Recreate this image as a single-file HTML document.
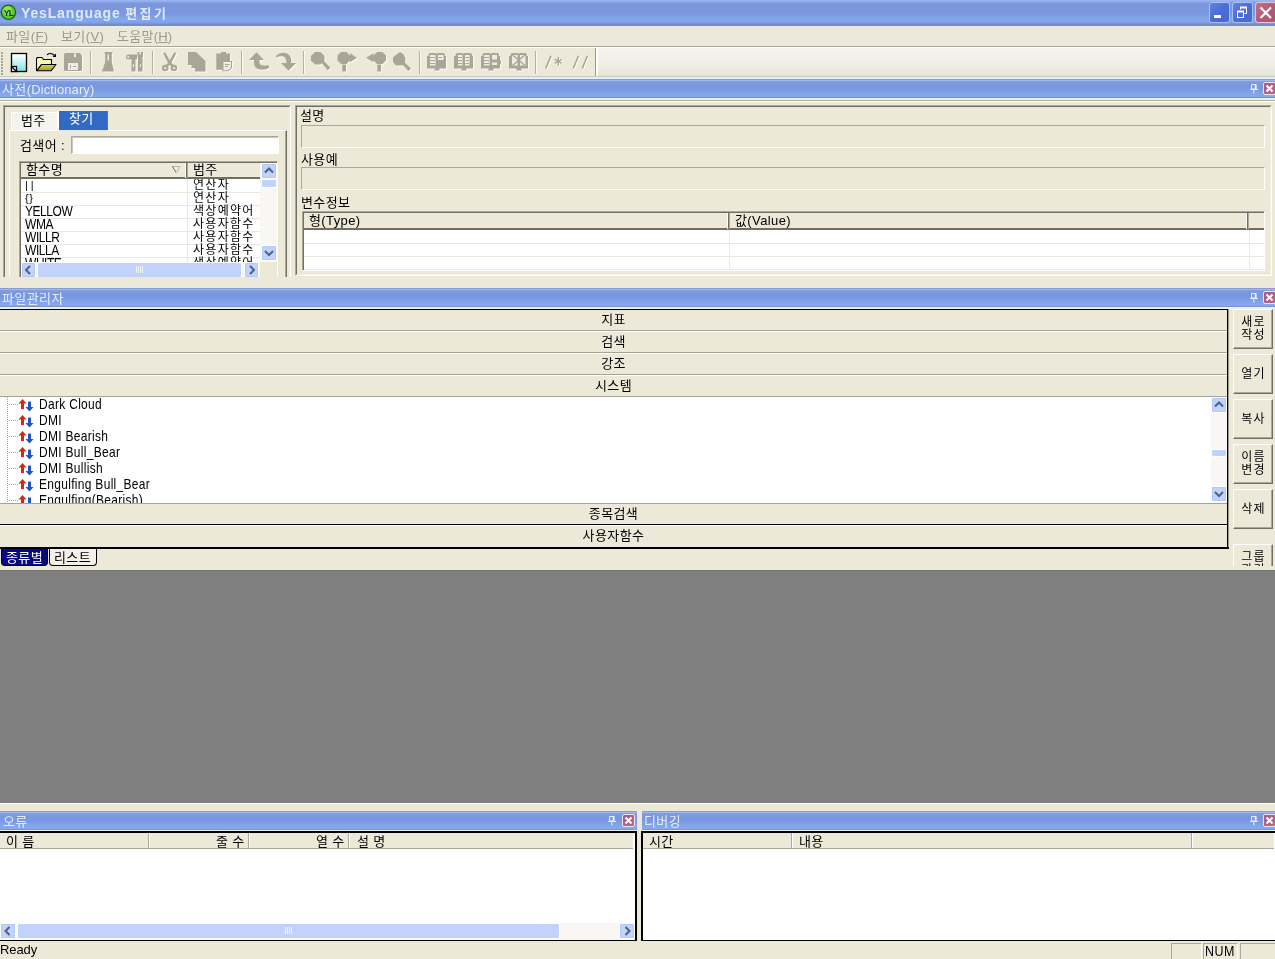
<!DOCTYPE html>
<html lang="ko">
<head>
<meta charset="utf-8">
<title>YesLanguage 편집기</title>
<style>
*{box-sizing:border-box;margin:0;padding:0}
html,body{width:1275px;height:959px;overflow:hidden;background:#ECE9D8}
body{position:relative;will-change:transform;font-family:"Liberation Sans","Noto Sans CJK KR","NanumGothic",sans-serif;font-size:13px;color:#000;line-height:14px;letter-spacing:.4px}
.abs{position:absolute}
.t{position:absolute;white-space:nowrap;line-height:14px;margin-top:1px}
.la{letter-spacing:.3px;font-size:12px;transform:scaleY(1.2);transform-origin:0 0;margin-top:0}
.cp{letter-spacing:-.45px;font-size:12px;transform:scaleY(1.15);transform-origin:0 0;margin-top:0}
/* main title */
#title{left:0;top:0;width:1275px;height:26px;background:linear-gradient(to bottom,#9bb6f2 0px,#99b4f0 1px,#8ba5e6 2px,#809bde 3px,#7b96dd 5px,#7b97e0 14px,#7e9fe4 16px,#7fa8e9 19px,#7fa6ea 22px,#7f9be3 23px,#7b8fd3 24px,#7788c4 25px,#7788c4 26px)}
#title .txt{left:21px;top:4px;font-weight:bold;font-size:14px;color:#dfe8fa;letter-spacing:.85px;line-height:16px}
.cap{position:absolute;height:19px;background:linear-gradient(to bottom,#8a9cca 0px,#8a9cca 1px,#a0b8ee 1px,#a0b8ee 2px,#829fe2 2px,#7c9adf 4px,#7896de 6px,#7b9ae2 11px,#80a2e7 13px,#87a9eb 17px,#87a9eb 18px,#8090d0 18px,#8090d0 19px)}
.cap .txt{left:2px;top:3px;color:#e4ecfb}
.capline{position:absolute;height:2px;background:#e6f2ef}
.pin{position:absolute;width:7px;height:10px}
.cx{position:absolute;width:12px;height:12px;background:#c0607f;border:1px solid #fff;border-radius:2px}
.sunk{position:absolute;border:1px solid;border-color:#aca899 #fff #fff #aca899}
.hdr{position:absolute;background:#ECE9D8}
.bar{position:absolute;left:0;width:1227px;height:22px;background:#ECE9D8;text-align:center;line-height:20px}
.btn{position:absolute;left:1233px;width:40px;height:40px;background:#ECE9D8;border:1px solid;border-color:#fff #716f64 #716f64 #fff;box-shadow:inset -1px -1px 0 #aca899;text-align:center;line-height:12.5px;font-size:12px;letter-spacing:1.2px;padding-left:1px}
.sb{position:absolute;background:#f8f7f3}
.sbb{position:absolute;width:16px;height:16px;background:#c2d3fb;border:1px solid #fff;border-radius:2px;box-shadow:inset 0 0 0 1px #b4c8f6}
.thumb{position:absolute;background:#c2d3fb;border:1px solid #fff;border-radius:2px}
.ti{position:absolute;left:0;width:300px;height:16px}
.ti .t{left:39px;top:1px}
</style>
</head>
<body>
<!-- TITLE BAR -->
<div id="title" class="abs">
  <svg class="abs" style="left:0;top:4px" width="18" height="17" viewBox="0 0 18 17"><circle cx="8.4" cy="8.2" r="7.8" fill="#245f12"/><circle cx="8.4" cy="8.2" r="6.5" fill="#5ccb2e"/><circle cx="7.6" cy="6.6" r="4.3" fill="#9bef62" opacity=".75"/><text x="8.6" y="11.6" font-family="Liberation Sans" font-weight="bold" font-size="8.5" text-anchor="middle" fill="#0c3a0c" letter-spacing="-.6">YL</text></svg>
  <div class="t txt">YesLanguage <span style="font-size:13px;letter-spacing:2.3px">편집기</span></div>
</div>
<div class="abs" style="left:0;top:26px;width:1275px;height:1px;background:#e6f2ef"></div>
<!-- MENU -->
<div class="t" style="left:6px;top:29px;color:#9d9a8c">파일(<u>F</u>)</div>
<div class="t" style="left:61px;top:29px;color:#9d9a8c">보기(<u>V</u>)</div>
<div class="t" style="left:117px;top:29px;color:#9d9a8c;letter-spacing:.25px">도움말(<u>H</u>)</div>
<div class="abs" style="left:0;top:46px;width:1275px;height:1px;background:#aca899"></div>
<div class="abs" style="left:0;top:47px;width:1275px;height:1px;background:#fff"></div>
<!-- TOOLBAR -->
<div id="tb" class="abs" style="left:0;top:48px;width:1275px;height:29px">
<svg class="abs" style="left:0;top:0" width="600" height="29" viewBox="0 48 600 29">
<defs>
<linearGradient id="gnew" x1="0" y1="0" x2="0" y2="1"><stop offset="0" stop-color="#ffffff"/><stop offset=".2" stop-color="#eefcfc"/><stop offset="1" stop-color="#7adfe4"/></linearGradient>
<linearGradient id="gfold" x1="0" y1="0" x2="0" y2="1"><stop offset="0" stop-color="#d6d258"/><stop offset="1" stop-color="#a39f22"/></linearGradient>
<g id="sep"><rect x="0" y="51" width="1" height="23" fill="#b4b1a2"/><rect x="1" y="51" width="1" height="23" fill="#fbfaf6"/></g>
<g id="gray">
<!-- save -->
<path d="M65.500 53 H79.500 L82 55.500 V69.500 Q82 71 80.500 71 H65.500 Q64 71 64 69.500 V54.500 Q64 53 65.500 53 Z"/>
<!-- flask -->
<path d="M104.500 52 H112.500 V53.500 H111.800 V62 L114 71.500 H102 L105.200 62 V53.500 H104.500 Z"/>
<!-- tools: hammer + wrench -->
<path d="M128.500 54.500 H137 V59.500 H135.500 V71.500 H131.500 V59.500 H128.500 Q126 59.500 126 57 Q126 54.500 128.500 54.500 Z"/>
<path d="M137.500 52 H139.500 V54.500 H141 V52 H143 V57 H142.500 V71.500 H138 V57 H137.500 Z"/>
<!-- scissors -->
<path d="M163.200 53.200 L165.200 52.300 L171 62.500 L174.800 66 L172.500 67.500 L168.500 63.800 Z"/>
<path d="M176.300 53.200 L174.300 52.300 L168.500 62.500 L164.700 66 L167 67.500 L171 63.800 Z"/>
<circle cx="165.300" cy="68" r="3.300"/><circle cx="174" cy="68" r="3.300"/>
<!-- copy -->
<path d="M188 52 H196 L205.500 61 V71.500 H195 V68 H191.500 V65 H188 Z"/>
<!-- paste -->
<path d="M216.300 53.500 H221 V52 H226 V53.500 H230 V61 H232 V68 L228.500 71.300 H222.500 V69.800 H216.300 Z"/>
<!-- undo -->
<path d="M249 60 L256.500 52.300 L264 60 H259.500 V62 Q259.500 65.500 264 65.500 H269 V68 Q266.500 69.800 262 69.800 Q254 69.800 254 62.500 V60 Z"/>
<!-- redo -->
<path d="M276 55.800 Q279.500 52.300 284.500 52.800 Q291 53.800 291.300 61 V63 H296 L288.500 70.800 L281 63 H286.300 V61 Q286 56.300 281.500 56.300 Q279 56.300 276 57.500 Z"/>
<!-- find -->
<path d="M315 52 H320.500 L324.500 56 V60.500 L320.500 64.500 H315 L311 60.500 V56 Z"/>
<path d="M320.500 61.500 L322.800 59.800 L330.300 67.800 L327.800 70.300 Z"/>
<!-- find next -->
<path d="M341 52 H346.500 L350 55.500 V53.300 L357 57.800 L350 62.300 V60.500 L346.500 64 H341 L337.500 60.500 V55.500 Z"/>
<rect x="342.300" y="64.500" width="3.700" height="7"/>
<!-- find prev -->
<path d="M377 52 H382.500 L386 55.500 V60.500 L382.500 64 H377 L373.500 60.500 V62.300 L366 57.800 L373.500 53.300 V55.500 Z"/>
<rect x="377.300" y="64.500" width="3.700" height="7"/>
<!-- find 4 -->
<path d="M396.500 54.500 L400 52 L403.500 54.500 L405.300 58 V62 L402.500 65.500 H396 L393 62 V57.500 Z"/>
<path d="M401.500 63.500 L403.800 61.500 L411 68.500 L408.500 71 Z"/>
<!-- books -->
<path id="bk" d="M428.500 55 Q428.500 53 430.500 53 H435.500 L436.500 54 L437.500 53 H443 Q445 53 445 55 V56 H446 V68.500 H439.500 V70.500 H434.500 V68.500 H427 V56 H428.500 Z"/>
<use href="#bk" x="27"/><use href="#bk" x="54"/><use href="#bk" x="82"/>
<path d="M457 62 L454 59.500 V65 Z M499 62 L501 60 V64.500 Z"/>
<!-- comment glyphs -->
<path d="M550.200 55.500 L551.700 56 L546.500 68.700 L545 68.200 Z M577.700 55.500 L579.200 56 L574 68.700 L572.500 68.200 Z M586.700 55.500 L588.200 56 L583 68.700 L581.500 68.200 Z"/>
<path d="M557.500 57 H559 V60 L561.300 58.700 L562 60 L559.700 61.300 L562 62.600 L561.300 63.900 L559 62.600 V65.500 H557.500 V62.600 L555.200 63.900 L554.500 62.600 L556.800 61.300 L554.500 60 L555.200 58.700 L557.500 60 Z"/>
</g>
</defs>
<!-- gripper -->
<g fill="#a9a798"><rect x="1" y="52" width="2" height="2"/><rect x="1" y="55" width="2" height="2"/><rect x="1" y="58" width="2" height="2"/><rect x="1" y="61" width="2" height="2"/><rect x="1" y="64" width="2" height="2"/><rect x="1" y="67" width="2" height="2"/><rect x="1" y="70" width="2" height="2"/><rect x="1" y="73" width="2" height="2"/></g>
<!-- new -->
<rect x="11.500" y="53.500" width="15" height="18" fill="url(#gnew)" stroke="#000" stroke-width="1.300"/>
<rect x="11.500" y="66.500" width="5" height="5" fill="#fff" stroke="#000" stroke-width="1.300"/>
<path d="M12 67 L16 71" stroke="#000" stroke-width="1.300"/>
<!-- open -->
<path d="M36.500 71 V58.500 L37.500 57.500 H42 L43.500 59.500 H51.500 V64.500 H41.500 L36.800 70.800" fill="#fbf8b0" stroke="#000" stroke-width="1.100" stroke-linejoin="round"/>
<path d="M36.800 70.800 L41.500 64.500 H56 L51 70.800 Z" fill="url(#gfold)" stroke="#000" stroke-width="1.100" stroke-linejoin="round"/>
<path d="M47 54.800 Q51 52 54.500 55.500" fill="none" stroke="#000" stroke-width="1.100"/>
<path d="M52.500 57 H56 V53.500 Z" fill="#000"/>
<use href="#sep" x="90"/><use href="#sep" x="152"/><use href="#sep" x="241"/><use href="#sep" x="303"/><use href="#sep" x="419"/><use href="#sep" x="535"/>
<!-- disabled icons: highlight then gray -->
<use href="#gray" x="1" y="1" fill="#fbfaf5"/>
<use href="#gray" fill="#a9a697"/>
<!-- light details on top -->
<g fill="#efede3">
<rect x="68" y="63" width="10" height="7"/><rect x="74" y="53.500" width="2" height="3.500"/>
<rect x="107.500" y="54.500" width="1.500" height="6"/>
<circle cx="128.200" cy="57" r="1"/><rect x="133" y="64" width="1" height="3"/><rect x="140" y="64" width="1" height="3"/>
<circle cx="165.300" cy="68.200" r="1.100"/><circle cx="174" cy="68.200" r="1.100"/>
<path d="M223.500 62 H231 V67.500 L228 70.300 H223.500 Z"/>
<rect x="430" y="55" width="5.500" height="10.500"/><rect x="438" y="55" width="5.500" height="5"/>
<rect x="458" y="55" width="4.500" height="10.500"/><rect x="465" y="55" width="4.500" height="10.500"/>
<rect x="484" y="55" width="5.500" height="10.500"/><rect x="492" y="55" width="5" height="4.500"/><rect x="492" y="62.500" width="5" height="2.500"/>
<rect x="512" y="55" width="5.500" height="10.500"/><rect x="520" y="55" width="5.500" height="10.500"/>
</g>
<g stroke="#a9a697" stroke-width="1" fill="none">
<path d="M70.500 65 V68.500 M73 66.500 H76"/>
<path d="M225 64.500 H229.500 M225 66.500 H228"/>
<path d="M430 57.500 H435 M430 60.500 H435 M430 63.500 H435 M438.500 57.500 H442"/>
<path d="M458 57.500 H462 M458 60.500 H462 M458 63.500 H462 M465.500 57.500 H469 M465.500 60.500 H469 M465.500 63.500 H469"/>
<path d="M484 57.500 H489 M484 60.500 H489 M484 63.500 H489"/>
<path d="M512.500 55 L525 65.500 M525 55 L512.500 65.500" stroke-width="1.500"/>
</g>
<rect x="595" y="48" width="1" height="28" fill="#9d9a8c"/><rect x="596" y="48" width="2" height="28" fill="#fffffb"/>
</svg>
<div class="abs" style="left:598px;top:0;width:677px;height:28px;background:linear-gradient(to bottom,#f4f3ee,#efeee6 60%,#e6e4d6)"></div>
</div>
<div class="abs" style="left:0;top:76px;width:1275px;height:1px;background:#c8cabb"></div>
<div class="abs" style="left:0;top:77px;width:1275px;height:2px;background:#e6ecfb"></div>
<!-- DICTIONARY -->
<div class="cap" style="left:0;top:79px;width:1275px"><div class="t txt">사전<span style="letter-spacing:.1px">(Dictionary)</span></div></div>
<div class="capline" style="left:0;top:98px;width:1275px"></div>
<div class="abs" style="left:0;top:100px;width:1275px;height:1px;background:#aaada0"></div>
<div class="abs" style="left:0;top:101px;width:1275px;height:1px;background:#fffffa"></div>
<div id="dict" class="abs" style="left:0;top:0;width:1275px;height:277px;overflow:hidden">
<!-- left group frame -->
<div class="abs" style="left:3px;top:105px;width:288px;height:190px;border:1px solid;border-color:#aca899 #fff #fff #aca899"></div>
<div class="abs" style="left:4px;top:106px;width:286px;height:188px;border:1px solid;border-color:#716f64 #f1efe2 #f1efe2 #716f64"></div>
<!-- tabs -->
<div class="abs" style="left:11px;top:112px;width:47px;height:18px;background:#f5f4ec;border-left:1px solid #fff;border-top:1px solid #fff"></div>
<div class="t" style="left:21px;top:113px">범주</div>
<div class="abs" style="left:59px;top:111px;width:49px;height:20px;background:#316ac5;border-right:1px solid #716f64;border-bottom:1px solid #716f64"></div>
<div class="abs" style="left:57px;top:111px;width:2px;height:19px;background:#fff"></div>
<div class="t" style="left:69px;top:111px;color:#fff">찾기</div>
<!-- tab pane -->
<div class="abs" style="left:9px;top:130px;width:278px;height:160px;border:1px solid;border-color:#fff #716f64 #716f64 #fff;box-shadow:inset -1px 0 0 #aca899"></div>
<div class="abs" style="left:60px;top:130px;width:48px;height:1px;background:#dfe9fb"></div>
<div class="t" style="left:20px;top:138px">검색어 :</div>
<div class="abs" style="left:71px;top:136px;width:208px;height:18px;background:#fff;border:1px solid;border-color:#aca899 #fff #fff #aca899;box-shadow:inset 1px 1px 0 #c9c7ba"></div>
<!-- list -->
<div class="abs" style="left:19px;top:161px;width:259px;height:130px;background:#fff;border:1px solid;border-color:#aca899 #fff #fff #aca899"></div>
<div class="abs" style="left:20px;top:162px;width:257px;height:130px;border-left:1px solid #716f64;border-top:1px solid #716f64"></div>
<div class="abs" style="left:21px;top:163px;width:239px;height:14px;background:#ECE9D8"></div>
<div class="abs" style="left:21px;top:177px;width:239px;height:2px;background:#716f64"></div>
<div class="abs" style="left:185px;top:163px;width:1px;height:15px;background:#fff"></div>
<div class="abs" style="left:186px;top:163px;width:1px;height:15px;background:#716f64"></div>
<div class="abs" style="left:187px;top:163px;width:1px;height:15px;background:#aca899"></div>
<div class="t" style="left:26px;top:162px">함수명</div>
<div class="t" style="left:193px;top:162px">범주</div>
<svg class="abs" style="left:171px;top:165px" width="11" height="9" viewBox="0 0 11 9"><path d="M1 1.500 H9 L5.500 7.500" fill="none" stroke="#b9b6a6" stroke-width="1"/><path d="M1.500 1.500 L5 7.500" stroke="#716f64" stroke-width="1"/></svg>
<!-- rows -->
<div id="rows" class="abs" style="left:21px;top:179px;width:239px;height:83px;overflow:hidden;background:#fff">
<div class="abs" style="left:0;top:13px;width:239px;height:1px;background:#ebe9df"></div>
<div class="abs" style="left:0;top:26px;width:239px;height:1px;background:#ebe9df"></div>
<div class="abs" style="left:0;top:39px;width:239px;height:1px;background:#ebe9df"></div>
<div class="abs" style="left:0;top:52px;width:239px;height:1px;background:#ebe9df"></div>
<div class="abs" style="left:0;top:65px;width:239px;height:1px;background:#ebe9df"></div>
<div class="abs" style="left:0;top:78px;width:239px;height:1px;background:#ebe9df"></div>
<div class="abs" style="left:166px;top:0;width:1px;height:90px;background:#ebe9df"></div>
<div class="t cp" style="left:4px;top:-2px;letter-spacing:3px;transform:none;font-size:11px;margin-top:1px">||</div><div class="t" style="left:172px;top:-2px;font-size:12px;letter-spacing:1.3px">연산자</div>
<div class="t cp" style="left:4px;top:11px;letter-spacing:.5px;transform:none;font-size:11px;margin-top:1px">{}</div><div class="t" style="left:172px;top:11px;font-size:12px;letter-spacing:1.3px">연산자</div>
<div class="t cp" style="left:4px;top:24px">YELLOW</div><div class="t" style="left:172px;top:24px;font-size:12px;letter-spacing:1.3px">색상예약어</div>
<div class="t cp" style="left:4px;top:37px">WMA</div><div class="t" style="left:172px;top:37px;font-size:12px;letter-spacing:1.3px">사용자함수</div>
<div class="t cp" style="left:4px;top:50px">WILLR</div><div class="t" style="left:172px;top:50px;font-size:12px;letter-spacing:1.3px">사용자함수</div>
<div class="t cp" style="left:4px;top:63px">WILLA</div><div class="t" style="left:172px;top:63px;font-size:12px;letter-spacing:1.3px">사용자함수</div>
<div class="t cp" style="left:4px;top:76px">WHITE</div><div class="t" style="left:172px;top:76px;font-size:12px;letter-spacing:1.3px">색상예약어</div>
</div>
<!-- vscroll -->
<div class="sb" style="left:260px;top:163px;width:17px;height:99px"></div>
<div class="sbb" style="left:261px;top:163px;width:16px;height:16px"><svg width="14" height="14" viewBox="0 0 14 14"><path d="M3 8.500 L7 4.500 L11 8.500" fill="none" stroke="#4d6185" stroke-width="2"/></svg></div>
<div class="thumb" style="left:261px;top:179px;width:16px;height:9px"></div>
<div class="sbb" style="left:261px;top:245px;width:16px;height:16px"><svg width="14" height="14" viewBox="0 0 14 14"><path d="M3 5 L7 9 L11 5" fill="none" stroke="#4d6185" stroke-width="2"/></svg></div>
<!-- hscroll -->
<div class="sb" style="left:21px;top:262px;width:256px;height:16px;background:#ECE9D8"></div>
<div class="sb" style="left:21px;top:262px;width:239px;height:16px"></div>
<div class="sbb" style="left:21px;top:262px;width:15px;height:16px"><svg width="13" height="14" viewBox="0 0 13 14"><path d="M8 3 L4 7 L8 11" fill="none" stroke="#4d6185" stroke-width="2"/></svg></div>
<div class="thumb" style="left:37px;top:262px;width:205px;height:16px"><svg class="abs" style="left:97px;top:3px" width="9" height="8" viewBox="0 0 9 8"><path d="M1.500 0 V7 M3.500 0 V7 M5.500 0 V7 M7.500 0 V7" stroke="#eef4fe" stroke-width="1"/></svg></div>
<div class="sbb" style="left:244px;top:262px;width:15px;height:16px"><svg width="13" height="14" viewBox="0 0 13 14"><path d="M5 3 L9 7 L5 11" fill="none" stroke="#4d6185" stroke-width="2"/></svg></div>
<!-- right group -->
<div class="abs" style="left:295px;top:105px;width:977px;height:171px;border:1px solid;border-color:#aca899 #fff #fff #aca899"></div>
<div class="abs" style="left:296px;top:106px;width:975px;height:169px;border:1px solid;border-color:#716f64 #f1efe2 #f1efe2 #716f64"></div>
<div class="t" style="left:300px;top:108px">설명</div>
<div class="sunk" style="left:301px;top:125px;width:964px;height:23px"></div>
<div class="t" style="left:301px;top:152px">사용예</div>
<div class="sunk" style="left:301px;top:167px;width:964px;height:23px"></div>
<div class="t" style="left:301px;top:195px">변수정보</div>
<div class="abs" style="left:302px;top:211px;width:963px;height:60px;background:#fff;border:1px solid;border-color:#aca899 #fff #fff #aca899"></div>
<div class="abs" style="left:303px;top:212px;width:961px;height:58px;border-left:1px solid #716f64;border-top:1px solid #716f64"></div>
<div class="abs" style="left:304px;top:213px;width:960px;height:15px;background:#ECE9D8"></div>
<div class="abs" style="left:304px;top:228px;width:960px;height:2px;background:#716f64"></div>
<div class="t" style="left:309px;top:213px">형(Type)</div>
<div class="t" style="left:735px;top:213px">값(Value)</div>
<div class="abs" style="left:727px;top:213px;width:1px;height:16px;background:#fff"></div><div class="abs" style="left:728px;top:213px;width:1px;height:16px;background:#716f64"></div><div class="abs" style="left:729px;top:213px;width:1px;height:16px;background:#aca899"></div>
<div class="abs" style="left:1246px;top:213px;width:1px;height:16px;background:#fff"></div><div class="abs" style="left:1247px;top:213px;width:1px;height:16px;background:#716f64"></div><div class="abs" style="left:1248px;top:213px;width:1px;height:16px;background:#aca899"></div>
<div class="abs" style="left:304px;top:243px;width:960px;height:1px;background:#ebe9df"></div>
<div class="abs" style="left:304px;top:256px;width:960px;height:1px;background:#ebe9df"></div>
<div class="abs" style="left:304px;top:269px;width:960px;height:1px;background:#ebe9df"></div>
<div class="abs" style="left:729px;top:230px;width:1px;height:40px;background:#ebe9df"></div>
<div class="abs" style="left:1249px;top:230px;width:1px;height:40px;background:#ebe9df"></div>
</div>
<!-- FILE MANAGER -->
<div class="cap" style="left:0;top:288px;width:1275px"><div class="t txt">파일관리자</div></div>
<div id="fm" class="abs" style="left:0;top:0;width:1275px;height:571px;overflow:hidden">
<div class="capline" style="left:0;top:307px;width:1275px"></div>
<div class="abs" style="left:0;top:309px;width:1228px;height:1px;background:#000"></div>
<div class="abs" style="left:1227px;top:309px;width:1px;height:240px;background:#000"></div><div class="abs" style="left:1228px;top:309px;width:1px;height:240px;background:#000;opacity:.35"></div>
<div class="abs" style="left:0;top:310px;width:1227px;height:20px;text-align:center;line-height:20px">지표</div>
<div class="abs" style="left:0;top:330px;width:1227px;height:1px;background:#a5a393"></div><div class="abs" style="left:0;top:331px;width:1227px;height:1px;background:#fff"></div>
<div class="abs" style="left:0;top:352px;width:1227px;height:1px;background:#a5a393"></div><div class="abs" style="left:0;top:353px;width:1227px;height:1px;background:#fff"></div>
<div class="abs" style="left:0;top:374px;width:1227px;height:1px;background:#a5a393"></div><div class="abs" style="left:0;top:375px;width:1227px;height:1px;background:#fff"></div>
<div class="abs" style="left:0;top:332px;width:1227px;height:20px;text-align:center;line-height:20px">검색</div>
<div class="abs" style="left:0;top:354px;width:1227px;height:20px;text-align:center;line-height:20px">강조</div>
<div class="abs" style="left:0;top:376px;width:1227px;height:20px;text-align:center;line-height:20px">시스템</div>
<div class="abs" style="left:0;top:396px;width:1227px;height:1px;background:#a5a393"></div>
<div id="tree" class="abs" style="left:0;top:397px;width:1227px;height:106px;background:#fff;overflow:hidden">
<div class="abs" style="left:7px;top:0;width:1px;height:106px;background:repeating-linear-gradient(to bottom,#a0a0a0 0,#a0a0a0 1px,#fff 1px,#fff 2px)"></div>
<div class="abs" style="left:8px;top:7px;width:10px;height:1px;background:repeating-linear-gradient(to right,#fff 0,#fff 1px,#a0a0a0 1px,#a0a0a0 2px)"></div><svg class="abs" style="left:18px;top:1px" width="16" height="14" viewBox="0 0 16 14"><path d="M4.500 1 L8.500 5.500 H6 V11 H3 V5.500 H0.500 Z" fill="#d9241c"/><path d="M10 3.500 H13 V9 H15.500 L11.500 13.500 L7.500 9 H10 Z" fill="#1f55c8"/></svg><div class="t la" style="left:39px;top:-1px">Dark Cloud</div>
<div class="abs" style="left:8px;top:23px;width:10px;height:1px;background:repeating-linear-gradient(to right,#fff 0,#fff 1px,#a0a0a0 1px,#a0a0a0 2px)"></div><svg class="abs" style="left:18px;top:17px" width="16" height="14" viewBox="0 0 16 14"><path d="M4.500 1 L8.500 5.500 H6 V11 H3 V5.500 H0.500 Z" fill="#d9241c"/><path d="M10 3.500 H13 V9 H15.500 L11.500 13.500 L7.500 9 H10 Z" fill="#1f55c8"/></svg><div class="t la" style="left:39px;top:15px">DMI</div>
<div class="abs" style="left:8px;top:39px;width:10px;height:1px;background:repeating-linear-gradient(to right,#fff 0,#fff 1px,#a0a0a0 1px,#a0a0a0 2px)"></div><svg class="abs" style="left:18px;top:33px" width="16" height="14" viewBox="0 0 16 14"><path d="M4.500 1 L8.500 5.500 H6 V11 H3 V5.500 H0.500 Z" fill="#d9241c"/><path d="M10 3.500 H13 V9 H15.500 L11.500 13.500 L7.500 9 H10 Z" fill="#1f55c8"/></svg><div class="t la" style="left:39px;top:31px">DMI Bearish</div>
<div class="abs" style="left:8px;top:55px;width:10px;height:1px;background:repeating-linear-gradient(to right,#fff 0,#fff 1px,#a0a0a0 1px,#a0a0a0 2px)"></div><svg class="abs" style="left:18px;top:49px" width="16" height="14" viewBox="0 0 16 14"><path d="M4.500 1 L8.500 5.500 H6 V11 H3 V5.500 H0.500 Z" fill="#d9241c"/><path d="M10 3.500 H13 V9 H15.500 L11.500 13.500 L7.500 9 H10 Z" fill="#1f55c8"/></svg><div class="t la" style="left:39px;top:47px">DMI Bull_Bear</div>
<div class="abs" style="left:8px;top:71px;width:10px;height:1px;background:repeating-linear-gradient(to right,#fff 0,#fff 1px,#a0a0a0 1px,#a0a0a0 2px)"></div><svg class="abs" style="left:18px;top:65px" width="16" height="14" viewBox="0 0 16 14"><path d="M4.500 1 L8.500 5.500 H6 V11 H3 V5.500 H0.500 Z" fill="#d9241c"/><path d="M10 3.500 H13 V9 H15.500 L11.500 13.500 L7.500 9 H10 Z" fill="#1f55c8"/></svg><div class="t la" style="left:39px;top:63px">DMI Bullish</div>
<div class="abs" style="left:8px;top:87px;width:10px;height:1px;background:repeating-linear-gradient(to right,#fff 0,#fff 1px,#a0a0a0 1px,#a0a0a0 2px)"></div><svg class="abs" style="left:18px;top:81px" width="16" height="14" viewBox="0 0 16 14"><path d="M4.500 1 L8.500 5.500 H6 V11 H3 V5.500 H0.500 Z" fill="#d9241c"/><path d="M10 3.500 H13 V9 H15.500 L11.500 13.500 L7.500 9 H10 Z" fill="#1f55c8"/></svg><div class="t la" style="left:39px;top:79px">Engulfing Bull_Bear</div>
<div class="abs" style="left:8px;top:103px;width:10px;height:1px;background:repeating-linear-gradient(to right,#fff 0,#fff 1px,#a0a0a0 1px,#a0a0a0 2px)"></div><svg class="abs" style="left:18px;top:97px" width="16" height="14" viewBox="0 0 16 14"><path d="M4.500 1 L8.500 5.500 H6 V11 H3 V5.500 H0.500 Z" fill="#d9241c"/><path d="M10 3.500 H13 V9 H15.500 L11.500 13.500 L7.500 9 H10 Z" fill="#1f55c8"/></svg><div class="t la" style="left:39px;top:95px">Engulfing(Bearish)</div>
<div class="sb" style="left:1211px;top:0;width:16px;height:106px"></div>
<div class="sbb" style="left:1211px;top:0px;width:16px;height:16px"><svg width="14" height="14" viewBox="0 0 14 14"><path d="M3 8.500 L7 4.500 L11 8.500" fill="none" stroke="#4d6185" stroke-width="2"/></svg></div>
<div class="thumb" style="left:1211px;top:52px;width:16px;height:8px"></div>
<div class="sbb" style="left:1211px;top:89px;width:16px;height:16px"><svg width="14" height="14" viewBox="0 0 14 14"><path d="M3 5 L7 9 L11 5" fill="none" stroke="#4d6185" stroke-width="2"/></svg></div>
</div>
<div class="abs" style="left:0;top:503px;width:1227px;height:1px;background:#a5a393"></div>
<div class="abs" style="left:0;top:504px;width:1227px;height:20px;text-align:center;line-height:20px">종목검색</div>
<div class="abs" style="left:0;top:524px;width:1227px;height:1px;background:#000"></div><div class="abs" style="left:0;top:525px;width:1227px;height:1px;background:#fff"></div>
<div class="abs" style="left:0;top:526px;width:1227px;height:20px;text-align:center;line-height:20px">사용자함수</div>
<div class="abs" style="left:0;top:547px;width:1229px;height:2px;background:#000"></div>
<div class="abs" style="left:1px;top:549px;width:47px;height:17px;background:#0a0a80;border-radius:0 0 4px 4px;border:1px solid #000;border-top:none"></div><div class="t" style="left:6px;top:550px;color:#fff">종류별</div>
<div class="abs" style="left:49px;top:549px;width:48px;height:17px;background:#f3f1e7;border-radius:0 0 4px 4px;border:1px solid #000;border-top:none"></div><div class="t" style="left:54px;top:550px">리스트</div>
<div class="abs" style="left:0;top:0;width:1275px;height:566px;overflow:hidden">
<div class="btn" style="top:309px"><div style="padding-top:6px">새로<br>작성</div></div>
<div class="btn" style="top:354px"><div style="padding-top:13px">열기</div></div>
<div class="btn" style="top:399px"><div style="padding-top:13px">복사</div></div>
<div class="btn" style="top:444px"><div style="padding-top:6px">이름<br>변경</div></div>
<div class="btn" style="top:489px"><div style="padding-top:13px">삭제</div></div>
<div class="btn" style="top:544px"><div style="padding-top:6px">그룹<br>관리</div></div>
</div>
</div>
<!-- MDI -->
<div class="abs" style="left:0;top:570px;width:1275px;height:233px;background:#808080;border-top:1px solid #77766d"></div>
<div class="abs" style="left:0;top:803px;width:1275px;height:1px;background:#fff"></div>
<!-- BOTTOM -->
<div class="cap" style="left:0;top:811px;width:637px"><div class="t txt" style="left:3px">오류</div></div>
<div class="cap" style="left:642px;top:811px;width:633px"><div class="t txt">디버깅</div></div>
<div id="err">
<div class="capline" style="left:0;top:830px;width:637px;height:1px"></div>
<div class="abs" style="left:0;top:831px;width:637px;height:2px;background:#000"></div>
<div class="abs" style="left:635px;top:831px;width:2px;height:110px;background:#000"></div>
<div class="abs" style="left:0;top:833px;width:635px;height:107px;background:#fff"></div>
<div class="abs" style="left:0;top:833px;width:633px;height:15px;background:#ECE9D8"></div>
<div class="abs" style="left:0;top:848px;width:633px;height:1px;background:#aca899"></div>
<div class="abs" style="left:148px;top:833px;width:1px;height:15px;background:#aca899"></div><div class="abs" style="left:149px;top:833px;width:1px;height:15px;background:#fff"></div>
<div class="abs" style="left:248px;top:833px;width:1px;height:15px;background:#aca899"></div><div class="abs" style="left:249px;top:833px;width:1px;height:15px;background:#fff"></div>
<div class="abs" style="left:348px;top:833px;width:1px;height:15px;background:#aca899"></div><div class="abs" style="left:349px;top:833px;width:1px;height:15px;background:#fff"></div>
<div class="t" style="left:6px;top:834px">이 름</div>
<div class="t" style="left:216px;top:834px">줄 수</div>
<div class="t" style="left:316px;top:834px">열 수</div>
<div class="t" style="left:357px;top:834px">설 명</div>
<div class="sb" style="left:0;top:923px;width:635px;height:17px"></div>
<div class="sbb" style="left:0px;top:923px;width:16px;height:16px"><svg width="14" height="14" viewBox="0 0 14 14"><path d="M8.500 3 L4.500 7 L8.500 11" fill="none" stroke="#4d6185" stroke-width="2"/></svg></div>
<div class="thumb" style="left:17px;top:923px;width:543px;height:16px"><svg class="abs" style="left:266px;top:3px" width="9" height="8" viewBox="0 0 9 8"><path d="M1.500 0 V7 M3.500 0 V7 M5.500 0 V7 M7.500 0 V7" stroke="#eef4fe" stroke-width="1"/></svg></div>
<div class="sbb" style="left:619px;top:923px;width:16px;height:16px"><svg width="14" height="14" viewBox="0 0 14 14"><path d="M5.500 3 L9.500 7 L5.500 11" fill="none" stroke="#4d6185" stroke-width="2"/></svg></div>
<div class="abs" style="left:0;top:940px;width:637px;height:1px;background:#000"></div>
</div>
<div id="dbg">
<div class="capline" style="left:641px;top:830px;width:634px;height:1px"></div>
<div class="abs" style="left:641px;top:831px;width:634px;height:2px;background:#000"></div>
<div class="abs" style="left:641px;top:831px;width:2px;height:110px;background:#000"></div>
<div class="abs" style="left:643px;top:833px;width:632px;height:107px;background:#fff"></div>
<div class="abs" style="left:643px;top:833px;width:631px;height:15px;background:#ECE9D8"></div>
<div class="abs" style="left:643px;top:848px;width:631px;height:1px;background:#aca899"></div>
<div class="abs" style="left:791px;top:833px;width:1px;height:15px;background:#aca899"></div><div class="abs" style="left:792px;top:833px;width:1px;height:15px;background:#fff"></div>
<div class="abs" style="left:1191px;top:833px;width:1px;height:15px;background:#aca899"></div><div class="abs" style="left:1192px;top:833px;width:1px;height:15px;background:#fff"></div>
<div class="t" style="left:649px;top:834px">시간</div>
<div class="t" style="left:799px;top:834px">내용</div>
<div class="abs" style="left:641px;top:940px;width:634px;height:1px;background:#000"></div>
</div>
<div class="abs" style="left:1171px;top:943px;width:31px;height:17px;border:1px solid;border-color:#aca899 #fff #fff #aca899"></div>
<div class="abs" style="left:1203px;top:943px;width:35px;height:17px;border:1px solid;border-color:#aca899 #fff #fff #aca899"></div>
<div class="abs" style="left:1240px;top:943px;width:36px;height:17px;border:1px solid;border-color:#aca899 #fff #fff #aca899"></div>
<div class="t" style="left:1205px;top:942px;letter-spacing:.5px;font-size:12.5px;transform:scaleY(1.15);transform-origin:0 0">NUM</div>

<svg class="abs" style="left:1250px;top:83px" width="9" height="11" viewBox="0 0 9 11"><path d="M1.500 1.500 H6 V6 H1.500 Z" fill="none" stroke="#e8effc" stroke-width="1"/><path d="M5.500 1 V6.500" stroke="#e8effc" stroke-width="1.600"/><path d="M0 6.500 H8" stroke="#e8effc" stroke-width="1"/><path d="M3.800 7 V10.500" stroke="#e8effc" stroke-width="1"/></svg><div class="abs" style="left:1263px;top:82px;width:13px;height:13px;background:linear-gradient(135deg,#a9587f,#b9688a);border:1px solid #f0e2ee;border-radius:2px"></div><svg class="abs" style="left:1263px;top:82px" width="13" height="13" viewBox="0 0 13 13"><path d="M3.500 3.500 L9.500 9.500 M9.500 3.500 L3.500 9.500" stroke="#fff" stroke-width="2.100"/></svg>
<svg class="abs" style="left:1250px;top:292px" width="9" height="11" viewBox="0 0 9 11"><path d="M1.500 1.500 H6 V6 H1.500 Z" fill="none" stroke="#e8effc" stroke-width="1"/><path d="M5.500 1 V6.500" stroke="#e8effc" stroke-width="1.600"/><path d="M0 6.500 H8" stroke="#e8effc" stroke-width="1"/><path d="M3.800 7 V10.500" stroke="#e8effc" stroke-width="1"/></svg><div class="abs" style="left:1263px;top:291px;width:13px;height:13px;background:linear-gradient(135deg,#a9587f,#b9688a);border:1px solid #f0e2ee;border-radius:2px"></div><svg class="abs" style="left:1263px;top:291px" width="13" height="13" viewBox="0 0 13 13"><path d="M3.500 3.500 L9.500 9.500 M9.500 3.500 L3.500 9.500" stroke="#fff" stroke-width="2.100"/></svg>
<svg class="abs" style="left:608px;top:815px" width="9" height="11" viewBox="0 0 9 11"><path d="M1.500 1.500 H6 V6 H1.500 Z" fill="none" stroke="#e8effc" stroke-width="1"/><path d="M5.500 1 V6.500" stroke="#e8effc" stroke-width="1.600"/><path d="M0 6.500 H8" stroke="#e8effc" stroke-width="1"/><path d="M3.800 7 V10.500" stroke="#e8effc" stroke-width="1"/></svg><div class="abs" style="left:622px;top:814px;width:13px;height:13px;background:linear-gradient(135deg,#a9587f,#b9688a);border:1px solid #f0e2ee;border-radius:2px"></div><svg class="abs" style="left:622px;top:814px" width="13" height="13" viewBox="0 0 13 13"><path d="M3.500 3.500 L9.500 9.500 M9.500 3.500 L3.500 9.500" stroke="#fff" stroke-width="2.100"/></svg>
<svg class="abs" style="left:1250px;top:815px" width="9" height="11" viewBox="0 0 9 11"><path d="M1.500 1.500 H6 V6 H1.500 Z" fill="none" stroke="#e8effc" stroke-width="1"/><path d="M5.500 1 V6.500" stroke="#e8effc" stroke-width="1.600"/><path d="M0 6.500 H8" stroke="#e8effc" stroke-width="1"/><path d="M3.800 7 V10.500" stroke="#e8effc" stroke-width="1"/></svg><div class="abs" style="left:1263px;top:814px;width:13px;height:13px;background:linear-gradient(135deg,#a9587f,#b9688a);border:1px solid #f0e2ee;border-radius:2px"></div><svg class="abs" style="left:1263px;top:814px" width="13" height="13" viewBox="0 0 13 13"><path d="M3.500 3.500 L9.500 9.500 M9.500 3.500 L3.500 9.500" stroke="#fff" stroke-width="2.100"/></svg>
<div class="abs" style="left:1209px;top:2px;width:21px;height:21px;border:1px solid #a9bef2;border-radius:3px;background:linear-gradient(135deg,#6283de,#4a6dd6 50%,#4668cf)"></div>
<div class="abs" style="left:1214px;top:15px;width:7px;height:3px;background:#fff"></div>
<div class="abs" style="left:1232px;top:2px;width:21px;height:21px;border:1px solid #a9bef2;border-radius:3px;background:linear-gradient(135deg,#6283de,#4a6dd6 50%,#4668cf)"></div>
<svg class="abs" style="left:1232px;top:2px" width="21" height="21" viewBox="0 0 21 21"><path d="M8.500 7.500 V5.500 H14.500 V11.500 H12.500" fill="none" stroke="#fff" stroke-width="1"/><path d="M8 5.500 H15" stroke="#fff" stroke-width="2"/><rect x="5.500" y="9.500" width="6" height="6" fill="none" stroke="#fff" stroke-width="1"/><path d="M5 9.500 H12" stroke="#fff" stroke-width="2"/></svg>
<div class="abs" style="left:1255px;top:2px;width:22px;height:21px;border:1px solid #e3c5d6;border-radius:3px;background:linear-gradient(135deg,#c2708a,#b55a78 50%,#b05070)"></div>
<svg class="abs" style="left:1255px;top:2px" width="21" height="21" viewBox="0 0 21 21"><path d="M5.500 5.500 L16 16 M16 5.500 L5.500 16" stroke="#fff" stroke-width="2.200"/></svg>
<!-- STATUS -->
<div class="t" style="left:0;top:942px;letter-spacing:-.1px">Ready</div>
</body>
</html>
